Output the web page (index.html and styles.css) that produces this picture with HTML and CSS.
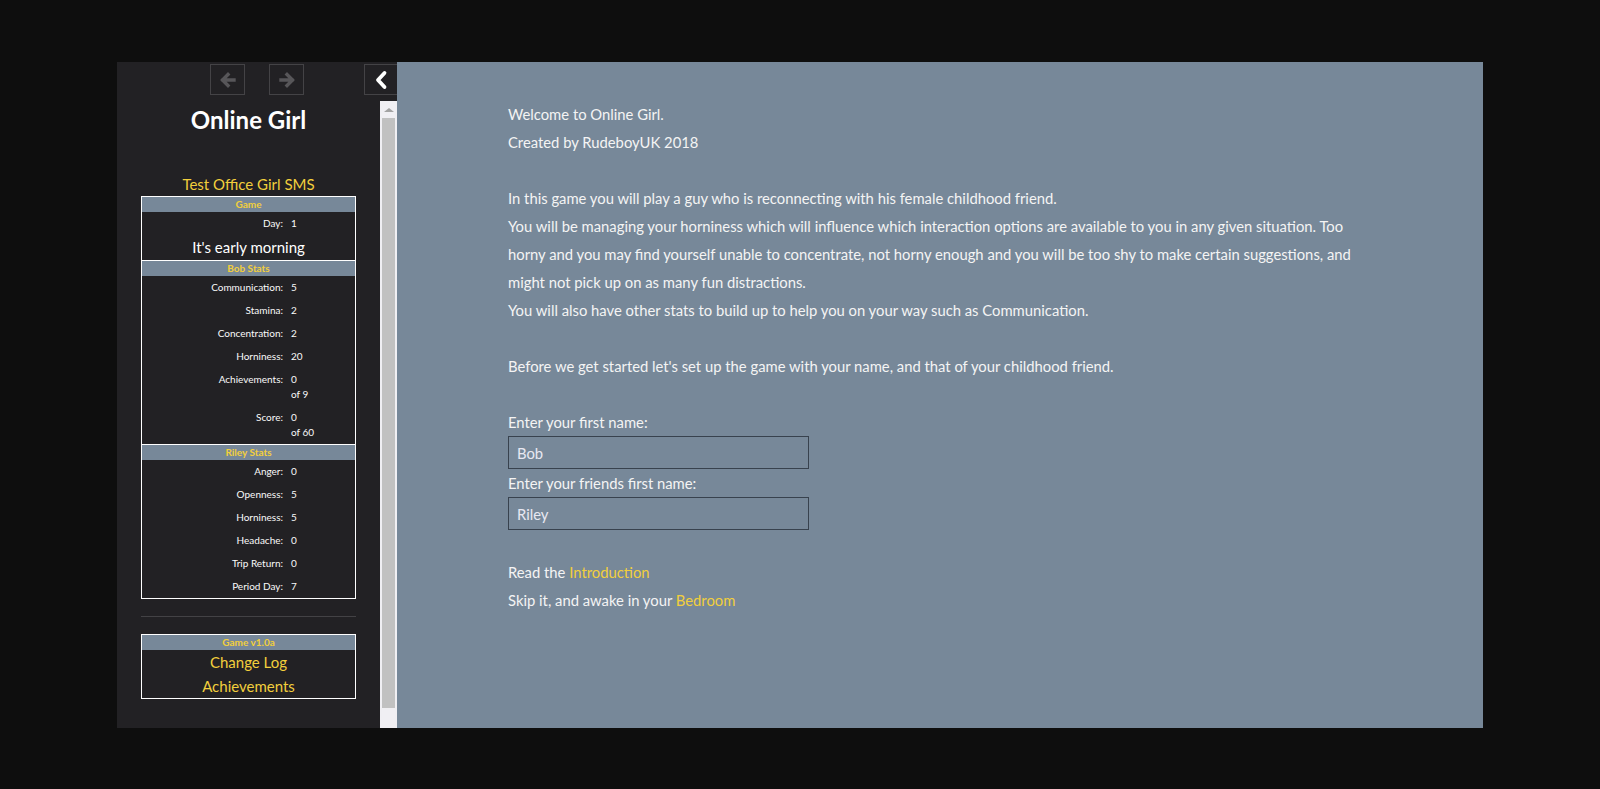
FILE: index.html
```html
<!DOCTYPE html>
<html>
<head>
    <title>Online Girl</title>
    <meta name="viewport" content="width=device-width, initial-scale=1">
    <link rel="stylesheet" href="styles.css">
</head>
<body>
    <div class="frame">
        <div class="sidebar">
            <div class="toolbar">
                <div class="history">
                    <button class="nav-btn" title="Go backward">
                        <svg width="18" height="18" viewBox="0 0 18 18"><path d="M15 9H4M9 3.5L3.5 9 9 14.5" fill="none" stroke="#575659" stroke-width="3.4" stroke-linecap="square"/></svg>
                    </button>
                    <button class="nav-btn" title="Go forward">
                        <svg width="18" height="18" viewBox="0 0 18 18"><path d="M3 9h11M9 3.5L14.5 9 9 14.5" fill="none" stroke="#575659" stroke-width="3.4" stroke-linecap="square"/></svg>
                    </button>
                </div>
                <button class="toggle-btn" title="Toggle the UI bar">
                    <svg width="14" height="20" viewBox="0 0 14 20"><path d="M10.5 3L4 10l6.5 7" fill="none" stroke="#fff" stroke-width="3.8" stroke-linecap="round" stroke-linejoin="round"/></svg>
                </button>
            </div>
            <div class="sidebar-body">
                <div class="sidebar-content">
                    <h1 class="story-title">Online Girl</h1>
                    <div class="story-subtitle">Test Office Girl SMS</div>

                    <div class="stat-box">
                        <div class="box-head">Game</div>
                        <div class="stat-row"><span class="stat-label">Day:</span><span class="stat-value">1</span></div>
                        <div class="time-of-day">It's early morning</div>
                    </div>

                    <div class="stat-box">
                        <div class="box-head">Bob Stats</div>
                        <div class="stat-row"><span class="stat-label">Communication:</span><span class="stat-value">5</span></div>
                        <div class="stat-row"><span class="stat-label">Stamina:</span><span class="stat-value">2</span></div>
                        <div class="stat-row"><span class="stat-label">Concentration:</span><span class="stat-value">2</span></div>
                        <div class="stat-row"><span class="stat-label">Horniness:</span><span class="stat-value">20</span></div>
                        <div class="stat-row"><span class="stat-label">Achievements:</span><span class="stat-value">0<br>of 9</span></div>
                        <div class="stat-row"><span class="stat-label">Score:</span><span class="stat-value">0<br>of 60</span></div>
                    </div>

                    <div class="stat-box">
                        <div class="box-head">Riley Stats</div>
                        <div class="stat-row"><span class="stat-label">Anger:</span><span class="stat-value">0</span></div>
                        <div class="stat-row"><span class="stat-label">Openness:</span><span class="stat-value">5</span></div>
                        <div class="stat-row"><span class="stat-label">Horniness:</span><span class="stat-value">5</span></div>
                        <div class="stat-row"><span class="stat-label">Headache:</span><span class="stat-value">0</span></div>
                        <div class="stat-row"><span class="stat-label">Trip Return:</span><span class="stat-value">0</span></div>
                        <div class="stat-row"><span class="stat-label">Period Day:</span><span class="stat-value">7</span></div>
                    </div>

                    <hr class="divider">

                    <div class="stat-box">
                        <div class="box-head">Game v1.0a</div>
                        <a class="menu-link" href="#">Change Log</a>
                        <a class="menu-link" href="#">Achievements</a>
                    </div>
                </div>
                <div class="fake-scrollbar">
                    <div class="scroll-up"></div>
                    <div class="scroll-thumb"></div>
                </div>
            </div>
        </div>

        <div class="passage">
            <p class="line">Welcome to Online Girl.</p>
            <p class="line">Created by RudeboyUK 2018</p>
            <p class="line blank"></p>
            <p class="line">In this game you will play a guy who is reconnecting with his female childhood friend.</p>
            <p class="line">You will be managing your horniness which will influence which interaction options are available to you in any given situation. Too horny and you may find yourself unable to concentrate, not horny enough and you will be too shy to make certain suggestions, and might not pick up on as many fun distractions.</p>
            <p class="line">You will also have other stats to build up to help you on your way such as Communication.</p>
            <p class="line blank"></p>
            <p class="line">Before we get started let's set up the game with your name, and that of your childhood friend.</p>
            <p class="line blank"></p>
            <label class="line" for="playerName">Enter your first name:</label>
            <input class="name-input" type="text" id="playerName" value="Bob">
            <label class="line" for="friendName">Enter your friends first name:</label>
            <input class="name-input" type="text" id="friendName" value="Riley">
            <p class="line blank"></p>
            <p class="line">Read the <a class="link" href="#">Introduction</a></p>
            <p class="line">Skip it, and awake in your <a class="link" href="#">Bedroom</a></p>
        </div>
    </div>
</body>
</html>
```

FILE: styles.css
```css
body {
    margin: 0;
    background-color: #0e0e0e;
    font-family: Lato, "Open Sans", sans-serif;
    color: #f4f4f4;
    height: 789px;
    overflow: hidden;
}
.frame {
    display: flex;
    width: 1366px;
    height: 666px;
    margin: 62px 0 0 117px;
}

/* ui bar */
.sidebar {
    width: 280px;
    flex-shrink: 0;
    background-color: #222124;
    display: flex;
    flex-direction: column;
}
.toolbar {
    display: flex;
    align-items: flex-start;
    height: 39px;
    padding-top: 2px;
    box-sizing: border-box;
}
.history {
    display: flex;
    gap: 24px;
    margin-left: 93px;
}
.nav-btn,
.toggle-btn {
    display: flex;
    align-items: center;
    justify-content: center;
    height: 31px;
    background: transparent;
    border: 1px solid #444346;
    padding: 0;
    cursor: pointer;
}
.nav-btn {
    width: 35px;
}
.toggle-btn {
    width: 33px;
    margin-left: auto;
    border-right: none;
}
.sidebar-body {
    flex: 1;
    display: flex;
    min-height: 0;
}
.sidebar-content {
    flex: 1;
    padding: 0 24px;
}
.story-title {
    margin: 4px 0 0;
    text-align: center;
    font-size: 24px;
    line-height: 30px;
    font-weight: bold;
    color: #fff;
}
.story-subtitle {
    margin-top: 39px;
    text-align: center;
    font-size: 15px;
    line-height: 20px;
    color: #f2cf3c;
}
.stat-box {
    border: 1px solid #fff;
    margin-top: -1px;
}
.story-subtitle + .stat-box {
    margin-top: 2px;
}
.box-head {
    background-color: #778899;
    color: #f2cf3c;
    font-size: 10px;
    font-weight: bold;
    text-align: center;
    line-height: 15px;
}
.stat-row {
    display: flex;
    font-size: 10px;
    line-height: 15px;
    padding: 4px 0;
    color: #fafafa;
}
.stat-label {
    width: 141px;
    text-align: right;
    flex-shrink: 0;
}
.stat-value {
    padding-left: 8px;
}
.time-of-day {
    text-align: center;
    font-size: 15px;
    line-height: 20px;
    padding: 2px 0 3px;
    color: #fff;
}
.divider {
    border: none;
    border-top: 1px solid #434245;
    margin: 17px 0 18px;
}
.menu-link {
    display: block;
    text-align: center;
    font-size: 15px;
    line-height: 20px;
    padding: 2px 0;
    color: #f2cf3c;
    text-decoration: none;
}
.fake-scrollbar {
    width: 17px;
    flex-shrink: 0;
    background-color: #f0eff3;
    display: flex;
    flex-direction: column;
    align-items: center;
}
.scroll-up {
    width: 0;
    height: 0;
    margin-top: 7px;
    border-left: 5px solid transparent;
    border-right: 5px solid transparent;
    border-bottom: 4px solid #a3a3a3;
}
.scroll-thumb {
    width: 13px;
    height: 590px;
    margin-top: 6px;
    background-color: #c1c1c1;
}

/* passage */
.passage {
    flex: 1;
    background-color: #778899;
    padding: 38px 111px 0;
    font-size: 14.8px;
}
.line {
    display: block;
    margin: 0;
    line-height: 28px;
}
.blank {
    height: 28px;
}
.name-input {
    display: block;
    width: 301px;
    height: 33px;
    box-sizing: border-box;
    background-color: #778899;
    border: 1px solid #38424e;
    color: #e8e8f2;
    font-family: inherit;
    font-size: 14.8px;
    padding: 0 8px;
    outline: none;
}
.link {
    color: #f2cf3c;
    text-decoration: none;
}
```
